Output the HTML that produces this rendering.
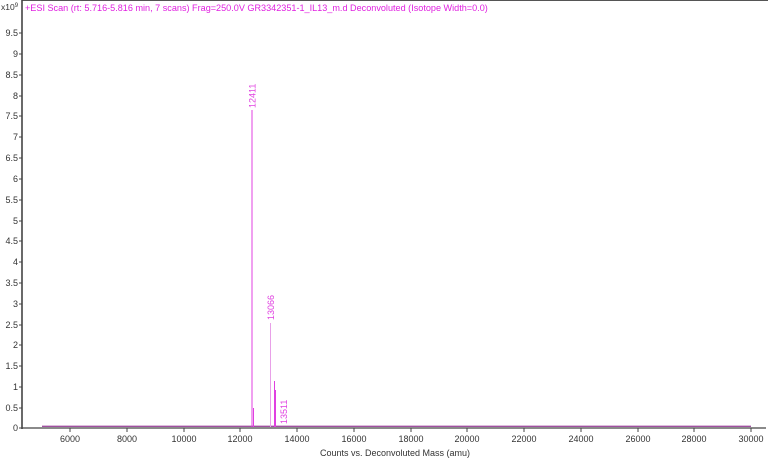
<!DOCTYPE html>
<html><head><meta charset="utf-8"><style>
html,body{margin:0;padding:0;background:#fff;}
svg{display:block;font-family:"Liberation Sans",Arial,sans-serif;}
</style></head><body>
<svg width="768" height="460" viewBox="0 0 768 460" xmlns="http://www.w3.org/2000/svg">
<rect width="768" height="460" fill="#fff"/>
<line x1="22" y1="0.5" x2="768" y2="0.5" stroke="#555" stroke-width="1"/>
<line x1="22" y1="0" x2="22" y2="429" stroke="#444" stroke-width="1.6"/>
<line x1="22" y1="428" x2="766" y2="428" stroke="#444" stroke-width="1.2"/>
<text x="25" y="11" font-size="9.1" fill="#e020e0">+ESI Scan (rt: 5.716-5.816 min, 7 scans) Frag=250.0V GR3342351-1_IL13_m.d  Deconvoluted (Isotope Width=0.0)</text>
<text x="1" y="10" font-size="8.5" fill="#333">x10<tspan font-size="6" dy="-3">9</tspan></text>
<g font-size="9" fill="#333" text-anchor="end">
<text x="18" y="36">9.5</text><text x="18" y="57">9</text><text x="18" y="78">8.5</text><text x="18" y="99">8</text><text x="18" y="119">7.5</text><text x="18" y="140">7</text><text x="18" y="161">6.5</text><text x="18" y="182">6</text><text x="18" y="203">5.5</text><text x="18" y="224">5</text><text x="18" y="244">4.5</text><text x="18" y="265">4</text><text x="18" y="286">3.5</text><text x="18" y="307">3</text><text x="18" y="328">2.5</text><text x="18" y="348">2</text><text x="18" y="369">1.5</text><text x="18" y="390">1</text><text x="18" y="411">0.5</text><text x="18" y="431">0</text>
</g>
<g stroke="#444" stroke-width="1">
<path d="M19 33H22M19 54H22M19 75H22M19 96H22M19 116H22M19 137H22M19 158H22M19 179H22M19 200H22M19 221H22M19 241H22M19 262H22M19 283H22M19 304H22M19 325H22M19 345H22M19 366H22M19 387H22M19 408H22M19 428H22"/>
<path d="M70 428V432M127 428V432M184 428V432M240 428V432M297 428V432M354 428V432M411 428V432M467 428V432M524 428V432M581 428V432M638 428V432M694 428V432M751 428V432"/>
</g>
<g font-size="9" fill="#333" text-anchor="middle">
<text x="70" y="442">6000</text><text x="127" y="442">8000</text><text x="184" y="442">10000</text><text x="240" y="442">12000</text><text x="297" y="442">14000</text><text x="354" y="442">16000</text><text x="411" y="442">18000</text><text x="467" y="442">20000</text><text x="524" y="442">22000</text><text x="581" y="442">24000</text><text x="638" y="442">26000</text><text x="694" y="442">28000</text><text x="751" y="442">30000</text>
<text x="395" y="456">Counts vs. Deconvoluted Mass (amu)</text>
</g>
<line x1="42" y1="426.3" x2="751" y2="426.3" stroke="#a050a0" stroke-width="1.4"/>
<g stroke="#e040e0" stroke-width="1">
<line x1="252" y1="427" x2="252" y2="110"/>
<line x1="253.5" y1="427" x2="253.5" y2="408"/>
<line x1="270.5" y1="427" x2="270.5" y2="323" stroke="#e8a0e8"/>
<line x1="274.5" y1="427" x2="274.5" y2="381"/>
<line x1="275.5" y1="427" x2="275.5" y2="390"/>
</g>
<g font-size="9" fill="#e040e0">
<text transform="translate(255.5,108) rotate(-90)">12411</text>
<text transform="translate(274,320) rotate(-90)">13066</text>
<text transform="translate(287,424) rotate(-90)">13511</text>
</g>
</svg>
</body></html>
